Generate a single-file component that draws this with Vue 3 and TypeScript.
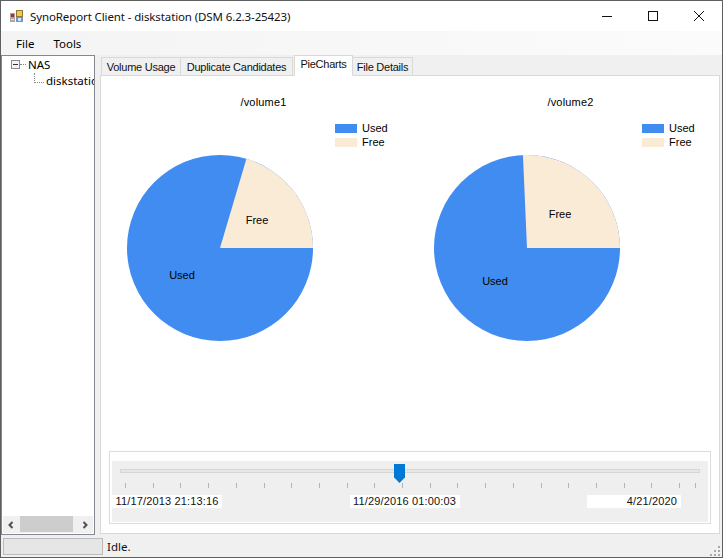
<script setup lang="ts">
interface Volume {
  name: string
  freeAngle: number
  usedLabel: [number, number]
  freeLabel: [number, number]
}

const volumes: Volume[] = [
  { name: '/volume1', freeAngle: 73.5, usedLabel: [55, 120], freeLabel: [130, 65] },
  { name: '/volume2', freeAngle: 92.5, usedLabel: [61, 126], freeLabel: [126, 59] }
]

const tabs = ['Volume Usage', 'Duplicate Candidates', 'PieCharts', 'File Details']

const R = 93

// slice runs counter-clockwise from 3 o'clock
const freePath = (angle: number) => {
  const a = (angle * Math.PI) / 180
  const x = R + R * Math.cos(a)
  const y = R - R * Math.sin(a)
  return `M${R} ${R}L${R * 2} ${R}A${R} ${R} 0 0 0 ${x.toFixed(2)} ${y.toFixed(2)}Z`
}

const ticks = Array.from({ length: 21 }, (_, i) => 5 + i * 27.7).concat(575)
</script>

<template>
  <div class="window">
    <header class="titlebar">
      <svg class="app-icon" width="14" height="14" viewBox="0 0 14 14">
        <rect x="0" y="4" width="5" height="9" fill="#a8a8a8" />
        <rect x="1" y="5" width="3" height="3" fill="#c82020" />
        <rect x="1" y="10" width="3" height="1" fill="#e8e8e8" />
        <rect x="6.5" y="1.5" width="6" height="6" fill="#f6c93e" stroke="#8e7a3c" />
        <rect x="6" y="8" width="7" height="5" fill="#6a96d8" />
        <rect x="8" y="9" width="3" height="3" fill="#d8e4f6" />
      </svg>
      <span class="title">SynoReport Client - diskstation (DSM 6.2.3-25423)</span>
      <div class="caption">
        <svg width="10" height="10" viewBox="0 0 10 10"><path d="M0 5.5h10" stroke="#111" fill="none" /></svg>
        <svg width="10" height="10" viewBox="0 0 10 10"><rect x=".5" y=".5" width="9" height="9" stroke="#111" fill="none" /></svg>
        <svg width="10" height="10" viewBox="0 0 10 10"><path d="M0 0l10 10M10 0L0 10" stroke="#111" fill="none" /></svg>
      </div>
    </header>

    <nav class="menubar">
      <span>File</span>
      <span>Tools</span>
    </nav>

    <div class="client">
      <aside class="tree">
        <div class="tree-body">
          <div class="node root">
            <svg width="9" height="9" viewBox="0 0 9 9" class="expander">
              <rect x=".5" y=".5" width="8" height="8" fill="#f4f4f4" stroke="#8c8c8c" />
              <path d="M2 4.5h5" stroke="#333" />
            </svg>
            <span class="dots"></span>
            <span>NAS</span>
          </div>
          <div class="node child">
            <span class="elbow"></span>
            <span>diskstation</span>
          </div>
        </div>
        <div class="hscroll">
          <svg width="8" height="8" viewBox="0 0 8 8"><path d="M5.5 1L2.5 4l3 3" stroke="#505050" stroke-width="2" fill="none" /></svg>
          <div class="hscroll-track"><div class="hscroll-thumb"></div></div>
          <svg width="8" height="8" viewBox="0 0 8 8"><path d="M2.5 1l3 3-3 3" stroke="#505050" stroke-width="2" fill="none" /></svg>
        </div>
      </aside>

      <main class="main">
        <div class="tabs">
          <div v-for="tab in tabs" :key="tab" class="tab" :class="{ active: tab === 'PieCharts' }">{{ tab }}</div>
        </div>
        <section class="page">
          <div class="charts">
            <div v-for="v in volumes" :key="v.name" class="chart">
              <div class="chart-title">{{ v.name }}</div>
              <div class="chart-body">
                <div class="pie">
                  <svg width="186" height="186" viewBox="0 0 186 186">
                    <circle :cx="R" :cy="R" :r="R" fill="#418cf0" />
                    <path :d="freePath(v.freeAngle)" fill="#faebd7" />
                    <text :x="v.usedLabel[0]" :y="v.usedLabel[1]" text-anchor="middle" dominant-baseline="middle">Used</text>
                    <text :x="v.freeLabel[0]" :y="v.freeLabel[1]" text-anchor="middle" dominant-baseline="middle">Free</text>
                  </svg>
                </div>
                <ul class="legend">
                  <li><i class="swatch used"></i>Used</li>
                  <li><i class="swatch free"></i>Free</li>
                </ul>
              </div>
            </div>
          </div>

          <div class="slider-group">
            <div class="slider">
              <div class="track">
                <div class="thumb"></div>
              </div>
              <div class="ticks">
                <i v-for="t in ticks" :key="t" :style="{ left: t + 'px' }"></i>
              </div>
              <div class="dates">
                <span class="date">11/17/2013 21:13:16</span>
                <span class="date">11/29/2016 01:00:03</span>
                <span class="date end">4/21/2020</span>
              </div>
            </div>
          </div>
        </section>
      </main>
    </div>

    <footer class="statusbar">
      <div class="progress"></div>
      <span class="status">Idle.</span>
      <svg class="grip" width="11" height="11" viewBox="0 0 11 11" fill="#a8a8a8">
        <rect x="8" y="0" width="2" height="2" />
        <rect x="4" y="4" width="2" height="2" />
        <rect x="8" y="4" width="2" height="2" />
        <rect x="0" y="8" width="2" height="2" />
        <rect x="4" y="8" width="2" height="2" />
        <rect x="8" y="8" width="2" height="2" />
      </svg>
    </footer>
  </div>
</template>

<style>
html,
body {
  margin: 0;
  overflow: hidden;
}
</style>

<style scoped>
.window {
  box-sizing: border-box;
  width: 723px;
  height: 558px;
  display: flex;
  flex-direction: column;
  background: #f0f0f0;
  border: 1px solid #5f5f5f;
  font-family: 'Liberation Sans', Arial, sans-serif;
  font-size: 11px;
  color: #000;
}

.titlebar {
  height: 30px;
  flex: none;
  display: flex;
  align-items: center;
  background: #fff;
  position: relative;
}

.app-icon {
  margin-left: 9px;
  margin-right: 6px;
}

.title {
  font-family: 'Noto Sans', sans-serif;
  font-size: 11.5px;
  letter-spacing: -0.115px;
  color: #111;
}

.caption {
  margin-left: auto;
  display: flex;
  align-items: center;
  gap: 36px;
  padding-right: 18px;
}

.menubar {
  height: 24px;
  flex: none;
  display: flex;
  align-items: center;
  gap: 19px;
  padding-left: 15px;
  background: linear-gradient(90deg, #f4f4f4, #fbfbfb);
  font-family: 'Noto Sans', sans-serif;
  font-size: 11.5px;
}

.client {
  flex: 1;
  min-height: 0;
  display: flex;
}

.tree {
  box-sizing: border-box;
  width: 94px;
  flex: none;
  display: flex;
  flex-direction: column;
  background: #fff;
  border: 1px solid #828790;
  overflow: hidden;
}

.tree-body {
  flex: 1;
  font-family: 'Noto Sans', sans-serif;
  font-size: 11.5px;
}

.node {
  height: 16px;
  display: flex;
  align-items: center;
  white-space: nowrap;
}

.root {
  padding-left: 9px;
}

.expander {
  flex: none;
}

.dots {
  width: 6px;
  margin-right: 2px;
  border-top: 1px dotted #888;
}

.child {
  padding-left: 44px;
  position: relative;
}

.elbow {
  position: absolute;
  left: 32px;
  top: 1px;
  width: 10px;
  height: 10px;
  border-left: 1px dotted #888;
  border-bottom: 1px dotted #888;
  box-sizing: border-box;
}

.hscroll {
  height: 17px;
  display: flex;
  align-items: center;
  padding: 0 4px;
  background: #f0f0f0;
  margin: 0 1px 1px;
}

.hscroll-track {
  flex: 1;
  height: 16px;
  align-self: flex-start;
  padding-left: 5px;
  box-sizing: border-box;
}

.hscroll-thumb {
  height: 100%;
  width: 53px;
  background: #cdcdcd;
}

.main {
  flex: 1;
  min-width: 0;
  display: flex;
  flex-direction: column;
  padding: 0 2px 1px 5px;
}

.tabs {
  display: flex;
  align-items: flex-end;
  height: 21px;
  padding-left: 1px;
  position: relative;
  z-index: 1;
  margin-bottom: -1px;
}

.tab {
  box-sizing: border-box;
  height: 19px;
  padding-top: 3px;
  text-align: center;
  background: #f0f0f0;
  border: 1px solid #d9d9d9;
  border-left-width: 0;
  color: #111;
  letter-spacing: -0.25px;
  white-space: nowrap;
}

.tab:nth-child(1) {
  width: 80px;
  border-left-width: 1px;
}

.tab:nth-child(2) {
  width: 112px;
}

.tab:nth-child(3) {
  width: 59px;
}

.tab:nth-child(4) {
  width: 60px;
}

.tab.active {
  height: 21px;
  margin-left: 1px;
  background: #fff;
  border-left-width: 1px;
  border-bottom-color: #fff;
  padding-top: 2px;
}

.page {
  flex: 1;
  min-height: 0;
  display: flex;
  flex-direction: column;
  background: #fff;
  border: 1px solid #d9d9d9;
}

.charts {
  display: flex;
  padding-top: 19px;
}

.chart {
  width: 307px;
  flex: none;
}

.chart-title {
  width: 325px;
  text-align: center;
  line-height: 14px;
  letter-spacing: 0.2px;
}

.chart-body {
  display: flex;
  align-items: flex-start;
  padding-left: 26px;
}

.pie {
  margin-top: 46px;
  line-height: 0;
}

.pie svg {
  display: block;
  font-size: 11px;
}

.pie text {
  transform: translateY(1px);
}

.legend {
  list-style: none;
  margin: 12px 0 0 22px;
  padding: 0;
}

.legend li {
  height: 14px;
  display: flex;
  align-items: center;
  white-space: nowrap;
}

.swatch {
  width: 22px;
  height: 9px;
  margin-right: 5px;
}

.swatch.used {
  background: #418cf0;
}

.swatch.free {
  background: #faebd7;
}

.slider-group {
  margin: auto 8px 9px;
  height: 73px;
  box-sizing: border-box;
  padding: 9px 2px 1px;
  border: 1px solid #dcdcdc;
}

.slider {
  height: 100%;
  background: #efefef;
  position: relative;
  padding: 8px 27px 0 0;
  box-sizing: border-box;
}

.track {
  height: 4px;
  margin: 0 -19px 0 8px;
  background: #e6e7e7;
  border: 1px solid #d6d6d6;
  box-sizing: border-box;
  position: relative;
}

.thumb {
  position: absolute;
  left: 273px;
  top: -6px;
  width: 11px;
  height: 19px;
  background: #0078d7;
  clip-path: polygon(0 0, 100% 0, 100% 70%, 50% 100%, 0 70%);
}

.ticks {
  position: relative;
  height: 5px;
  margin: 10px 0 0 8px;
}

.ticks i {
  position: absolute;
  top: 0;
  width: 1px;
  height: 5px;
  background: #b4b4b4;
}

.dates {
  display: flex;
  justify-content: space-between;
  margin-top: 7px;
}

.date {
  box-sizing: border-box;
  width: 110px;
  height: 13px;
  line-height: 13px;
  text-align: center;
  background: #fff;
  color: #111;
  letter-spacing: 0.15px;
  white-space: nowrap;
}

.date.end {
  width: 94px;
  text-align: right;
  padding-right: 4px;
}

.statusbar {
  height: 22px;
  flex: none;
  display: flex;
  align-items: center;
  position: relative;
  padding-left: 2px;
}

.progress {
  box-sizing: border-box;
  width: 100px;
  height: 17px;
  background: #e6e6e6;
  border: 1px solid #bcbcbc;
}

.status {
  margin-left: 4px;
  font-family: 'Noto Sans', sans-serif;
  font-size: 11.5px;
  color: #111;
}

.grip {
  position: absolute;
  right: 1px;
  bottom: 0;
}
</style>
